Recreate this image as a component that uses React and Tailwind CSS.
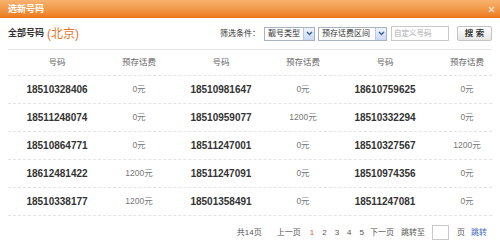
import React from "react";

const rows = [
  ["18510328406", "0元", "18510981647", "0元", "18610759625", "0元"],
  ["18511248074", "0元", "18510959077", "1200元", "18510332294", "0元"],
  ["18510864771", "0元", "18511247001", "0元", "18510327567", "1200元"],
  ["18612481422", "1200元", "18511247091", "0元", "18510974356", "0元"],
  ["18510338177", "1200元", "18501358491", "0元", "18511247081", "0元"],
];

function Arrow() {
  return (
    <div className="w-[11px] h-full flex items-center justify-center bg-gradient-to-b from-[#eef3fc] to-[#c9d8f2] border-l border-[#b9c8e3]">
      <svg width="7" height="5" viewBox="0 0 7 5">
        <path d="M1 1 L3.5 3.6 L6 1" fill="none" stroke="#3f5f9e" strokeWidth="1.4" />
      </svg>
    </div>
  );
}

function Select({ label, w }) {
  return (
    <div className={`${w} h-[14px] border border-[#a7b2c2] bg-white flex items-stretch`}>
      <div className="flex-1 flex items-center pl-[3px] text-[8px] leading-none text-[#333]">{label}</div>
      <Arrow />
    </div>
  );
}

export default function App() {
  return (
    <div
      className="w-[500px] h-[249px] overflow-hidden bg-white"
      style={{ fontFamily: '"Liberation Sans","Noto Sans CJK SC",sans-serif' }}
    >
      {/* title bar */}
      <div className="h-[18px] bg-gradient-to-b from-[#f8b26f] via-[#f39a48] to-[#eb7612] flex items-center justify-between pl-2 pr-[5px]">
        <span className="text-[9px] font-bold text-white leading-none">选新号码</span>
        <svg width="7" height="7" viewBox="0 0 7 7">
          <path d="M1 1 L6 6 M6 1 L1 6" stroke="#f8d9c3" strokeWidth="1.6" />
        </svg>
      </div>

      {/* toolbar */}
      <div className="h-[31px] flex items-center justify-between px-2">
        <div className="flex items-center">
          <span className="text-[9px] font-bold text-[#333] leading-none">全部号码</span>
          <span className="ml-[3px] text-[12px] text-[#e8772e] leading-none">(北京)</span>
        </div>
        <div className="flex items-center">
          <span className="text-[8px] text-[#333] leading-none">筛选条件：</span>
          <div className="ml-[4px]">
            <Select label="靓号类型" w="w-[51px]" />
          </div>
          <div className="ml-[3px]">
            <Select label="预存话费区间" w="w-[69px]" />
          </div>
          <div className="ml-[4px] w-[58px] h-[15px] border border-[#c9c9c9] bg-white flex items-center pl-[2px] text-[7.5px] text-[#aaa] leading-none">
            自定义号码
          </div>
          <div className="ml-[8px] w-[35px] h-[15px] border border-[#c4c4c4] rounded-[2px] bg-gradient-to-b from-white to-[#e6e6e6] flex items-center justify-center text-[8.5px] font-bold text-[#333] leading-none">
            搜&nbsp;索
          </div>
        </div>
      </div>

      {/* table */}
      <div className="mx-2 border-t border-[#e6e6e6]">
        <div className="h-[26px] border-b border-dashed border-[#e4e4e4] overflow-hidden">
          <div className="grid grid-cols-[repeat(6,82px)] pl-2 h-full items-center text-[8.5px] text-[#666] text-center leading-none">
            <span>号码</span>
            <span>预存话费</span>
            <span>号码</span>
            <span>预存话费</span>
            <span>号码</span>
            <span>预存话费</span>
          </div>
        </div>
        {rows.map((r, i) => (
          <div key={i} className="h-[28px] border-b border-dashed border-[#e4e4e4] overflow-hidden">
            <div className="grid grid-cols-[repeat(6,82px)] pl-2 h-full items-center text-center leading-none">
              {r.map((c, j) =>
                j % 2 === 0 ? (
                  <span key={j} className="text-[10px] font-bold text-[#333]">{c}</span>
                ) : (
                  <span key={j} className="text-[8.5px] text-[#777]">{c}</span>
                )
              )}
            </div>
          </div>
        ))}
      </div>

      {/* pagination */}
      <div className="h-[33px] flex items-center justify-end pr-[13px] text-[8px] text-[#555] leading-none">
        <span>共14页</span>
        <span className="ml-[15px]">上一页</span>
        <span className="ml-[9px] text-[#e8503a]">1</span>
        <span className="ml-[8px]">2</span>
        <span className="ml-[8px]">3</span>
        <span className="ml-[8px]">4</span>
        <span className="ml-[8px]">5</span>
        <span className="ml-[6px]">下一页</span>
        <span className="ml-[7px]">跳转至</span>
        <div className="ml-[7px] w-[17px] h-[15px] border border-[#c9c9c9] bg-white" />
        <span className="ml-[8px]">页</span>
        <span className="ml-[6px] text-[#3a63b8]">跳转</span>
      </div>
    </div>
  );
}
